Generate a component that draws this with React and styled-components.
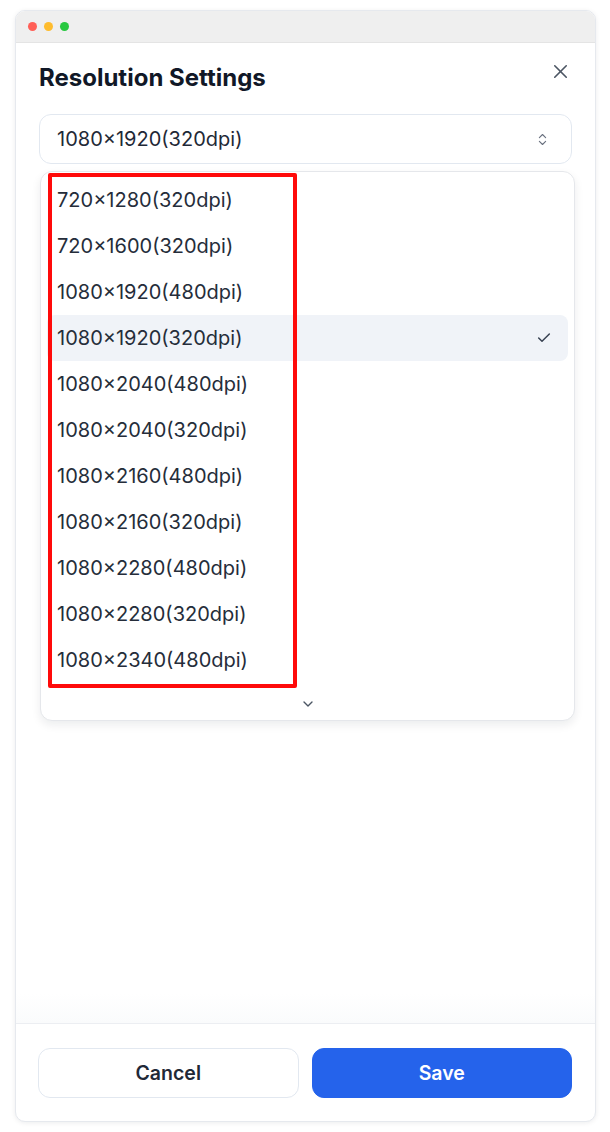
import React, { useState } from 'react';
import styled, { createGlobalStyle } from 'styled-components';
import { X, ChevronsUpDown, ChevronDown, Check } from 'lucide-react';

const resolutions = [
  '720×1280(320dpi)',
  '720×1600(320dpi)',
  '1080×1920(480dpi)',
  '1080×1920(320dpi)',
  '1080×2040(480dpi)',
  '1080×2040(320dpi)',
  '1080×2160(480dpi)',
  '1080×2160(320dpi)',
  '1080×2280(480dpi)',
  '1080×2280(320dpi)',
  '1080×2340(480dpi)',
];

const GlobalStyle = createGlobalStyle`
  html, body {
    margin: 0;
    padding: 0;
    background: #ffffff;
  }
  body {
    font-family: Inter, "Noto Sans", "Liberation Sans", sans-serif;
    -webkit-font-smoothing: antialiased;
  }
  * {
    box-sizing: border-box;
  }
`;

const Page = styled.div`
  padding: 10px 14px 10px 15px;
`;

const Window = styled.div`
  width: 581px;
  height: 1112px;
  border-radius: 10px;
  border: 1px solid #e6e9ee;
  background: #ffffff;
  box-shadow: 0 1px 5px rgba(15, 23, 42, 0.08);
  display: flex;
  flex-direction: column;
  overflow: hidden;
`;

const TitleBar = styled.div`
  height: 32px;
  flex-shrink: 0;
  background: #efefef;
  border-bottom: 1px solid #e4e4e4;
  display: flex;
  align-items: center;
  gap: 7px;
  padding-left: 12px;
`;

const Dot = styled.span`
  width: 9px;
  height: 9px;
  border-radius: 50%;
  background: ${props => props.color};
`;

const Body = styled.div`
  flex: 1;
  padding: 21px 24px 0 23px;
  background: linear-gradient(to bottom, #ffffff 0, #ffffff 97%, #fafbfc 100%);
`;

const Header = styled.div`
  display: flex;
  align-items: flex-start;
  justify-content: space-between;
`;

const Title = styled.h2`
  margin: 0;
  font-size: 24px;
  line-height: 28px;
  font-weight: 700;
  color: #111827;
  letter-spacing: 0;
`;

const CloseButton = styled.button`
  border: none;
  background: none;
  padding: 0;
  margin: -4px -1px 0 0;
  color: #4b5563;
  display: flex;
  cursor: pointer;
`;

const Trigger = styled.button`
  width: 533px;
  height: 50px;
  margin-top: 22px;
  padding: 0 21px 0 17px;
  border: 1px solid #e2e8f0;
  border-radius: 12px;
  background: #ffffff;
  display: flex;
  align-items: center;
  justify-content: space-between;
  font-family: inherit;
  font-size: 20px;
  color: #1f2937;
  cursor: pointer;
`;

const List = styled.div`
  position: relative;
  width: 535px;
  margin: 7px 0 0 1px;
  padding: 5px 6px 0 6px;
  border: 1px solid #e5e7eb;
  border-radius: 12px;
  background: #ffffff;
  box-shadow: 0 4px 10px rgba(15, 23, 42, 0.08);
`;

const Option = styled.div`
  height: 46px;
  padding: 0 16px 0 10px;
  border-radius: 8px;
  display: flex;
  align-items: center;
  justify-content: space-between;
  font-size: 20px;
  color: #252d3a;
  background: ${props => (props.selected ? '#f0f3f8' : 'transparent')};
`;

const ScrollDown = styled.div`
  height: 37px;
  padding-top: 5px;
  display: flex;
  align-items: center;
  justify-content: center;
  color: #4b5563;
`;

const Highlight = styled.div`
  position: absolute;
  left: 7px;
  top: 1px;
  width: 249px;
  height: 515px;
  border: 4px solid #ff0a0a;
  border-radius: 2px;
  pointer-events: none;
`;

const Footer = styled.div`
  flex-shrink: 0;
  border-top: 1px solid #eceef2;
  padding: 24px 23px 23px 22px;
  display: grid;
  grid-template-columns: 1fr 1fr;
  gap: 13px;
`;

const FooterButton = styled.button`
  height: 50px;
  border-radius: 12px;
  font-family: inherit;
  font-size: 19.5px;
  font-weight: 600;
  cursor: pointer;
  border: 1px solid ${props => (props.primary ? '#2563eb' : '#e2e8f0')};
  background: ${props => (props.primary ? '#2563eb' : '#ffffff')};
  color: ${props => (props.primary ? '#ffffff' : '#1f2937')};
`;

const App = () => {
  const [value, setValue] = useState('1080×1920(320dpi)');

  return (
    <Page>
      <GlobalStyle />
      <Window>
        <TitleBar>
          <Dot color="#ff5f57" />
          <Dot color="#febc2e" />
          <Dot color="#28c840" />
        </TitleBar>
        <Body>
          <Header>
            <Title>Resolution Settings</Title>
            <CloseButton type="button" aria-label="Close">
              <X size={23} strokeWidth={1.7} />
            </CloseButton>
          </Header>
          <Trigger type="button">
            <span>{value}</span>
            <ChevronsUpDown size={15} color="#6b7280" strokeWidth={1.8} />
          </Trigger>
          <List>
            {resolutions.map(res => (
              <Option
                key={res}
                selected={res === value}
                onClick={() => setValue(res)}
              >
                <span>{res}</span>
                {res === value && <Check size={16} strokeWidth={2.2} color="#374151" />}
              </Option>
            ))}
            <ScrollDown>
              <ChevronDown size={16} strokeWidth={2} />
            </ScrollDown>
            <Highlight />
          </List>
        </Body>
        <Footer>
          <FooterButton type="button">Cancel</FooterButton>
          <FooterButton type="button" primary>
            Save
          </FooterButton>
        </Footer>
      </Window>
    </Page>
  );
};

export default App;
